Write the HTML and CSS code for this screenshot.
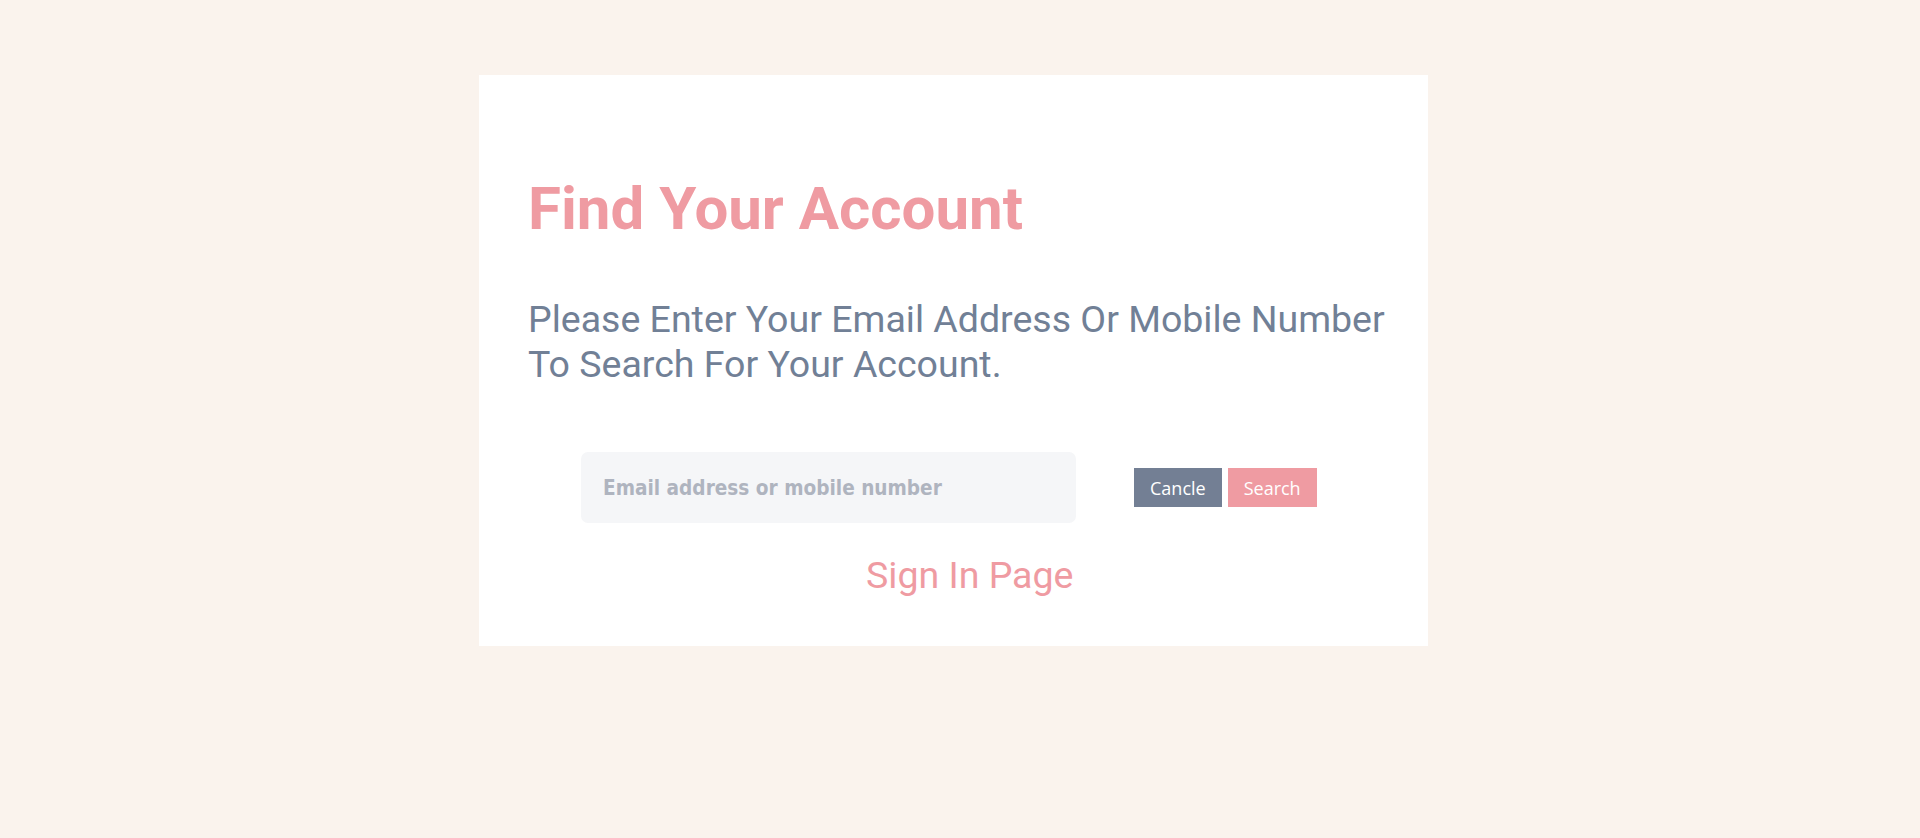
FILE: index.html
```html
<!DOCTYPE html>
<html lang="en">
<head>
<meta charset="utf-8">
<title>Find Your Account</title>
<link rel="stylesheet" href="styles.css">
</head>
<body>
<main class="card">
  <h1 class="title">Find Your Account</h1>
  <p class="lead">Please Enter Your Email Address Or Mobile Number To Search For Your Account.</p>
  <form class="search-row">
    <input class="field" type="text" placeholder="Email address or mobile number">
    <div class="actions">
      <button type="button" class="btn btn-cancel">Cancle</button>
      <button type="button" class="btn btn-search">Search</button>
    </div>
  </form>
  <a class="signin" href="#">Sign In Page</a>
</main>
</body>
</html>
```
FILE: styles.css
```css
html, body {
  margin: 0;
  padding: 0;
}
body {
  background: #faf3ed;
  min-height: 838px;
  display: flex;
  justify-content: center;
  align-items: flex-start;
  padding-right: 13px;
  box-sizing: border-box;
  font-family: Roboto, "Liberation Sans", sans-serif;
}
.card {
  margin-top: 75px;
  width: 949px;
  height: 571px;
  box-sizing: border-box;
  background: #ffffff;
  padding: 104px 40px 0 49px;
  display: flex;
  flex-direction: column;
}
.title {
  margin: 0;
  font-family: Roboto, sans-serif;
  font-weight: 700;
  font-size: 60px;
  line-height: 1;
  color: #ef9ba2;
}
.lead {
  margin: 58px 0 0;
  font-family: Roboto, sans-serif;
  font-weight: 400;
  font-size: 37.5px;
  line-height: 45px;
  color: #718096;
}
.search-row {
  margin: 65px 0 0 53px;
  display: flex;
  align-items: center;
}
.field {
  width: 495px;
  height: 71px;
  box-sizing: border-box;
  border: none;
  border-radius: 7px;
  background: #f5f6f8;
  padding: 0 22px;
  font-family: "DejaVu Sans Condensed", "DejaVu Sans", sans-serif;
  font-stretch: semi-condensed;
  font-weight: 700;
  font-size: 20.6px;
  color: #4a5568;
  outline: none;
}
.field::placeholder {
  color: #afb4bf;
  opacity: 1;
}
.actions {
  margin-left: 58px;
  display: flex;
  gap: 6px;
}
.btn {
  height: 39px;
  border: none;
  padding: 0 16px;
  font-family: "Open Sans", sans-serif;
  font-size: 18px;
  color: #ffffff;
  cursor: pointer;
}
.btn-cancel {
  background: #737f94;
}
.btn-search {
  background: #ef9ba2;
}
.signin {
  align-self: flex-start;
  margin: 32px 0 0 338px;
  font-family: Roboto, sans-serif;
  font-size: 37.5px;
  line-height: 40px;
  color: #ef9ba2;
  text-decoration: none;
}
```
